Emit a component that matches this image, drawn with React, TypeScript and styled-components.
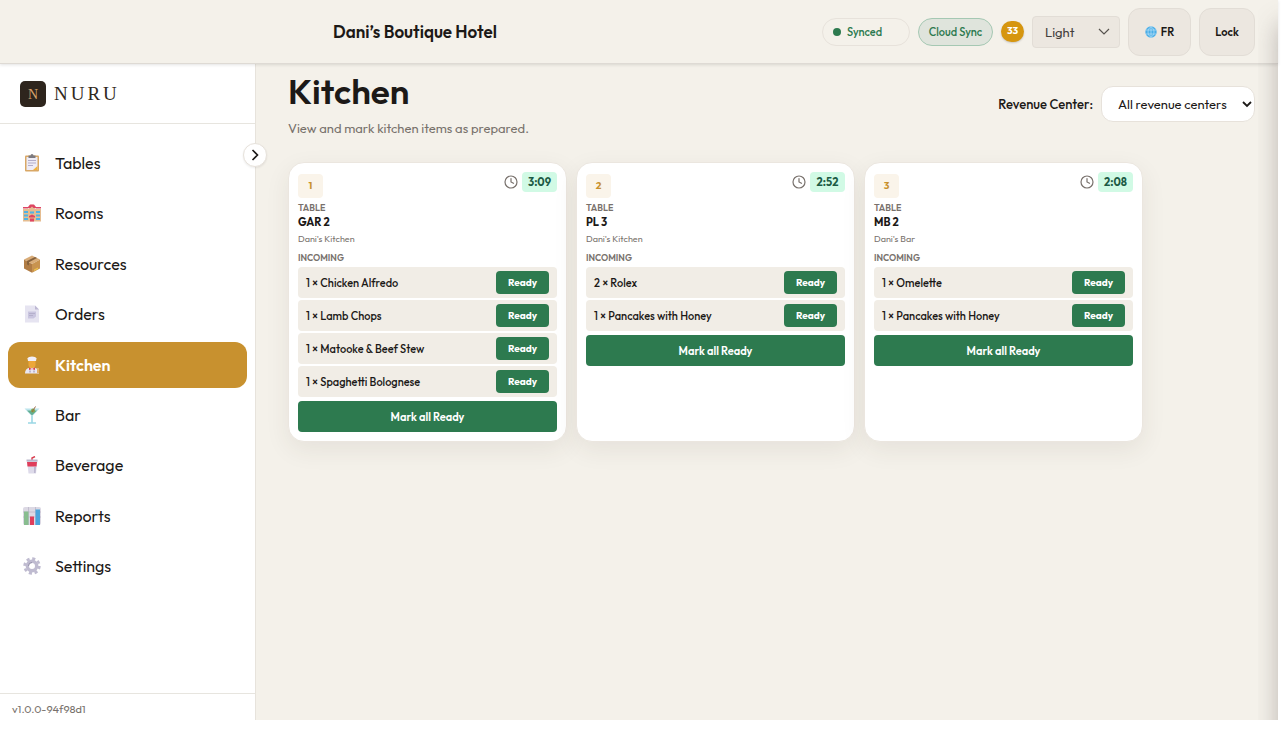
import React from "react";
import styled, { createGlobalStyle } from "styled-components";

const GlobalStyle = createGlobalStyle`
  *, *::before, *::after { box-sizing: border-box; }
  body {
    margin: 0;
    background: #fff;
    color: #1c1917;
    font-family: Outfit, Lato, "Liberation Sans", sans-serif;
    font-size: 14px;
  }
  button, select { font-family: inherit; color: inherit; margin: 0; }
  h1, h2, p, ul { margin: 0; padding: 0; }
  ul { list-style: none; }
`;

const Shell = styled.div`
  position: relative;
  display: flex;
  flex-direction: column;
  min-height: calc(100vh - 33px);
  margin-right: 6px;
  background: #f4f1ea;
`;

const EdgeShade = styled.div`
  position: absolute;
  top: 0;
  right: 0;
  bottom: 0;
  width: 20px;
  z-index: 5;
  overflow: hidden;
  pointer-events: none;
  &::before {
    content: "";
    position: absolute;
    top: 24px;
    left: 100%;
    bottom: -40px;
    width: 60px;
    box-shadow: 0 0 24px rgba(87, 75, 75, 0.36);
  }
`;

const TopBar = styled.header`
  position: relative;
  z-index: 2;
  display: flex;
  align-items: center;
  justify-content: space-between;
  height: 64px;
  padding: 0 23px 0 333px;
  border-bottom: 1px solid #dedad4;
  box-shadow: 0 1px 3px rgba(28, 25, 23, 0.12);
  background: #f4f1ea;
`;

const HotelName = styled.div`
  font-size: 17px;
  font-weight: 600;
  line-height: 24px;
`;

const Tools = styled.div`
  display: flex;
  align-items: center;
  gap: 8px;
`;

const Status = styled.div`
  display: flex;
  align-items: center;
  gap: 6px;
  width: 88px;
  height: 28px;
  padding: 0 10px;
  border: 1px solid #e7e2db;
  border-radius: 14px;
  color: #2d7a4f;
  font-size: 11px;
  font-weight: 500;
`;

const Dot = styled.span`
  width: 8px;
  height: 8px;
  border-radius: 50%;
  background: #2d7a4f;
`;

const SyncButton = styled.button`
  width: 75px;
  height: 28px;
  padding: 0;
  border: 1px solid #a5c8b3;
  border-radius: 14px;
  background: #dfe4dc;
  color: #2d7a4f;
  font-size: 11px;
  font-weight: 500;
`;

const Count = styled.span`
  width: 23px;
  height: 21px;
  border-radius: 11px;
  background: #d6960f;
  box-shadow: 0 1px 2px rgba(28, 25, 23, 0.2);
  color: #fff;
  font-size: 10px;
  font-weight: 700;
  line-height: 20px;
  text-align: center;
`;

const ToolButton = styled.button<{ $width: number }>`
  display: flex;
  align-items: center;
  justify-content: center;
  gap: 4px;
  width: ${(p) => p.$width}px;
  height: 48px;
  padding: 0;
  border: 1px solid #e2ddd6;
  border-radius: 12px;
  background: #ece7e0;
  font-size: 11px;
  font-weight: 600;
`;

const SelectBox = styled.div`
  position: relative;
  display: flex;
  align-items: center;
  svg { position: absolute; pointer-events: none; }
`;

const ThemeSelect = styled.select`
  appearance: none;
  width: 88px;
  height: 32px;
  padding: 0 12px;
  border: 1px solid #e2ddd6;
  border-radius: 4px;
  background: #ece7e0;
  color: #44403c;
  font-size: 13px;
  & + svg { right: 10px; }
`;

const CenterSelect = styled.select`
  appearance: none;
  width: 154px;
  height: 36px;
  padding: 0 16px;
  border: 1px solid #e7e2db;
  border-radius: 12px;
  background: #fff;
  font-size: 13px;
  & + svg { right: 3px; }
`;

const Body = styled.div`
  display: flex;
  flex: 1;
`;

const Sidebar = styled.aside`
  position: relative;
  display: flex;
  flex-direction: column;
  flex: none;
  width: 256px;
  border-right: 1px solid #e7e3dc;
  background: #fff;
`;

const Brand = styled.div`
  display: flex;
  align-items: center;
  gap: 8px;
  height: 60px;
  padding: 0 20px;
  border-bottom: 1px solid #e7e5df;
  color: #302820;
  font-family: "Liberation Serif", serif;
  font-size: 19px;
  letter-spacing: 3px;
`;

const BrandMark = styled.span`
  width: 26px;
  height: 26px;
  border-radius: 5px;
  background: #2e251d;
  color: #d7a26a;
  font-size: 14px;
  letter-spacing: 0;
  line-height: 27px;
  text-align: center;
`;

const Toggle = styled.button`
  position: absolute;
  top: 79px;
  right: -12px;
  z-index: 3;
  display: flex;
  align-items: center;
  justify-content: center;
  width: 24px;
  height: 24px;
  padding: 0;
  border: 1px solid #e7e2db;
  border-radius: 50%;
  background: #fff;
  box-shadow: 0 1px 2px rgba(28, 25, 23, 0.08);
`;

const Nav = styled.nav`
  flex: 1;
  padding: 16px 8px;
  ul {
    display: flex;
    flex-direction: column;
    justify-content: space-between;
    height: 449px;
  }
`;

const NavLink = styled.a<{ $active: boolean }>`
  display: flex;
  align-items: center;
  gap: 14px;
  height: 46px;
  padding: 0 15px;
  border-radius: 12px;
  background: ${(p) => (p.$active ? "#c8912f" : "transparent")};
  color: ${(p) => (p.$active ? "#fff" : "#1c1917")};
  font-size: 16px;
  font-weight: ${(p) => (p.$active ? 600 : 400)};
  text-decoration: none;
`;

const Version = styled.div`
  height: 27px;
  padding: 0 12px;
  border-top: 1px solid #e7e5df;
  color: #78716c;
  font-size: 11px;
  line-height: 31px;
`;

const Main = styled.main`
  flex: 1;
  padding: 7px 23px 40px 32px;
`;

const PageHead = styled.div`
  display: flex;
  align-items: center;
  justify-content: space-between;
  h1 { font-size: 35px; font-weight: 600; line-height: 40px; }
  p { margin-top: 8px; color: #78716c; font-size: 13px; line-height: 18px; }
`;

const Filter = styled.div`
  display: flex;
  align-items: center;
  gap: 8px;
  font-size: 13px;
  font-weight: 500;
`;

const Tickets = styled.div`
  display: grid;
  grid-template-columns: repeat(auto-fill, 279px);
  gap: 9px;
  margin-top: 25px;
`;

const Ticket = styled.article`
  padding: 9px;
  border: 1px solid #ebe6df;
  border-radius: 16px;
  background: #fff;
  box-shadow: 0 8px 24px rgba(68, 50, 40, 0.08);
`;

const TicketHead = styled.div`
  display: flex;
  align-items: flex-start;
  justify-content: space-between;
  padding-bottom: 1px;
`;

const Num = styled.span`
  width: 25px;
  height: 24px;
  margin-top: 2px;
  border-radius: 4px;
  background: #faf4ea;
  color: #c8912f;
  font-size: 10px;
  font-weight: 700;
  line-height: 24px;
  text-align: center;
`;

const Timer = styled.div`
  display: flex;
  align-items: center;
  gap: 4px;
  time {
    width: 35px;
    border-radius: 4px;
    background: #d1fae5;
    color: #1d5b45;
    font-size: 11px;
    font-weight: 700;
    line-height: 20px;
    text-align: center;
  }
`;

const Caption = styled.div`
  color: #78716c;
  font-size: 9px;
  font-weight: 600;
  line-height: 18px;
`;

const TableName = styled.h2`
  font-size: 11px;
  font-weight: 700;
  line-height: 10px;
`;

const Station = styled.div`
  padding: 3px 0 1px;
  color: #78716c;
  font-size: 9px;
  line-height: 18px;
`;

const Items = styled.ul`
  display: grid;
  gap: 2px;
`;

const Item = styled.li`
  display: flex;
  align-items: center;
  justify-content: space-between;
  height: 31px;
  padding: 0 8px;
  border-radius: 4px;
  background: #f1ede6;
  font-size: 11px;
  font-weight: 500;
`;

const Action = styled.button<{ $wide?: boolean }>`
  width: ${(p) => (p.$wide ? "100%" : "53px")};
  height: ${(p) => (p.$wide ? 31 : 23)}px;
  margin-top: ${(p) => (p.$wide ? 4 : 0)}px;
  padding: 0;
  border: 0;
  border-radius: 4px;
  background: #2d7a4f;
  color: #fff;
  font-size: ${(p) => (p.$wide ? 11 : 10)}px;
  font-weight: ${(p) => (p.$wide ? 600 : 700)};
`;

const art: Record<string, React.ReactNode> = {
  Tables: (
    <>
      <rect x="2" y="1.5" width="14" height="16" rx="1" fill="#d9a866" />
      <rect x="3.5" y="3" width="11" height="13" fill="#eeecf6" />
      <path d="M5 6.500h8M5 9h8M5 11.500h5" stroke="#b3adc9" />
      <path d="M14.500 12v4H10z" fill="#f2b33d" />
      <path d="M5.500 1.500h2a1.500 1.500 0 0 1 3 0h2V4h-7z" fill="#7c7a80" />
    </>
  ),
  Rooms: (
    <>
      <path d="M0 5h6V2.500L9 .5l3 2V5h6v12.500H0z" fill="#e5bd91" />
      <path d="M0 3h5.500v1.500H0zM12.500 3H18v1.500h-5.500zM5 3 7 .5h4L13 3v1h-2.500l-1.500-1.500L7.500 4H5z" fill="#de4563" />
      <path d="M1 7h4v2H1zM1 10.500h4v2H1zM1 14h4v2H1zM13 7h4v2h-4zM13 10.500h4v2h-4zM13 14h4v2h-4zM7 7.500h4v2H7z" fill="#4fb3e6" />
      <path d="M6 12l3-1.500 3 1.500v1.500H6zM7 14.500h4v3H7z" fill="#de4563" />
    </>
  ),
  Resources: (
    <>
      <path d="M9 .5 17 4.500 9 9 1 4.500z" fill="#d9ac78" />
      <path d="M1 4.500 9 9v8.800L1 13.500z" fill="#b07c45" />
      <path d="M17 4.500 9 9v8.800l8-4.300z" fill="#c8934f" />
      <path d="m12 2 2 1-8 4.300v3.200l-2-1V6z" fill="#85613c" />
      <path d="m11 14.500 4-2v1.500l-4 2z" fill="#eac04a" />
    </>
  ),
  Orders: (
    <>
      <path d="M2 .5h10l4 4v13H2z" fill="#e6e4f1" />
      <path d="M12 .5v4h4z" fill="#bdb8d3" />
      <path d="M5 6.500h8v5l-2.500 2H5z" fill="#c9c5df" />
      <path d="M6 8.500h6M6 10.500h4" stroke="#b5b0cc" />
    </>
  ),
  Kitchen: (
    <>
      <path d="M2 17.500c0-4 2.500-6 7-6s7 2 7 6z" fill="#e9e7f2" />
      <path d="M5.500 4h7v5c0 4-7 4-7 0z" fill="#eda739" />
      <path d="M4.500 2.500C5-.2 13-.2 13.500 2.500L13 5H5z" fill="#f1eff8" />
      <path d="M6 11.500 9 13l3-1.500v2.500l-3-1-3 1z" fill="#d93e50" />
      <path d="M7 14.500v2M11 14.500v2" stroke="#9088a6" />
      <path d="M14 12h2v5h-2z" fill="#e3ae63" />
    </>
  ),
  Bar: (
    <>
      <path d="M1.500 2.500h15L9 10.500z" fill="#bce4ec" />
      <path d="M4 4.500h10l-5 5z" fill="#63ad91" />
      <path d="M9 10v6.500M5 17h8" stroke="#9bd7e5" strokeWidth="1.600" />
      <circle cx="10" cy="4.500" r="2" fill="#86a64a" />
      <path d="m9 6 3.500-5.500" stroke="#9a6848" />
    </>
  ),
  Beverage: (
    <>
      <path d="M9 4V2l3-1.500" fill="none" stroke="#d93e50" strokeWidth="1.400" />
      <path d="M4 4h10.500l-1.500 13.500H5.500z" fill="#dedbea" />
      <path d="M3.500 3.500h11v2h-11z" fill="#bbb6ca" />
      <path d="M4 6h10l-.5 4.500h-9z" fill="#df3e5b" />
      <path d="M11 11h2l-.5 6H11z" fill="#bdb8d0" />
    </>
  ),
  Reports: (
    <>
      <rect x="0" y="0" width="18" height="18" rx="2" fill="#dcd9e4" />
      <path d="M5.500 0v18M12.500 0v18M0 5h18M0 10h18" stroke="#bcb7c9" strokeWidth=".8" />
      <rect x="1" y="4.500" width="4.500" height="13.500" fill="#88bd8f" />
      <rect x="7" y="9.500" width="4" height="8.500" fill="#df3e5b" />
      <rect x="12.500" y="2.500" width="4.500" height="15.500" fill="#4aa5dc" />
    </>
  ),
  Settings: (
    <>
      <circle cx="9" cy="9" r="7.400" fill="none" stroke="#bfbbd0" strokeWidth="2.600" strokeDasharray="3.100 2.711" />
      <circle cx="9" cy="9" r="4.700" fill="none" stroke="#bfbbd0" strokeWidth="3.400" />
      <path d="M5.500 9A3.500 3.500 0 0 1 9 5.500" fill="none" stroke="#9691aa" />
    </>
  ),
};

const sections = ["Tables", "Rooms", "Resources", "Orders", "Kitchen", "Bar", "Beverage", "Reports", "Settings"];

const tickets = [
  { table: "GAR 2", station: "Dani's Kitchen", time: "3:09", items: ["1 × Chicken Alfredo", "1 × Lamb Chops", "1 × Matooke & Beef Stew", "1 × Spaghetti Bolognese"] },
  { table: "PL 3", station: "Dani's Kitchen", time: "2:52", items: ["2 × Rolex", "1 × Pancakes with Honey"] },
  { table: "MB 2", station: "Dani's Bar", time: "2:08", items: ["1 × Omelette", "1 × Pancakes with Honey"] },
];

const Clock = () => (
  <svg width="14" height="14" viewBox="0 0 14 14" fill="none" stroke="#78716c" strokeWidth="1.200" aria-hidden="true">
    <circle cx="7" cy="7" r="6" />
    <path d="M7 3.500V7l2.500 1.300" strokeLinecap="round" />
  </svg>
);

const Globe = () => (
  <svg width="12" height="12" viewBox="0 0 12 12" aria-hidden="true">
    <circle cx="6" cy="6" r="5.700" fill="#4aaee8" />
    <path d="M1 4h10M1 8h10M6 .5v11M6 .5c-4 3-4 8 0 11M6 .5c4 3 4 8 0 11" fill="none" stroke="#b9e1f7" strokeWidth=".7" />
  </svg>
);

export default function App() {
  return (
    <Shell>
      <GlobalStyle />
      <TopBar>
        <HotelName>Dani’s Boutique Hotel</HotelName>
        <Tools>
          <Status><Dot />Synced</Status>
          <SyncButton>Cloud Sync</SyncButton>
          <Count>33</Count>
          <SelectBox>
            <ThemeSelect aria-label="Theme" defaultValue="Light">
              <option>Light</option>
            </ThemeSelect>
            <svg width="12" height="8" viewBox="0 0 12 8" fill="none" stroke="#57534e" strokeWidth="1.200">
              <path d="m1 1 5 5 5-5" />
            </svg>
          </SelectBox>
          <ToolButton $width={63}><Globe />FR</ToolButton>
          <ToolButton $width={56}>Lock</ToolButton>
        </Tools>
      </TopBar>
      <Body>
        <Sidebar>
          <Brand><BrandMark>N</BrandMark>NURU</Brand>
          <Toggle aria-label="Toggle sidebar">
            <svg width="8" height="12" viewBox="0 0 8 12" fill="none" stroke="#1c1917" strokeWidth="1.600">
              <path d="m1.500 1 5 5-5 5" />
            </svg>
          </Toggle>
          <Nav>
            <ul>
              {sections.map((name) => (
                <li key={name}>
                  <NavLink href="#" $active={name === "Kitchen"}>
                    <svg width="18" height="18" viewBox="0 0 18 18" aria-hidden="true">{art[name]}</svg>
                    {name}
                  </NavLink>
                </li>
              ))}
            </ul>
          </Nav>
          <Version>v1.0.0-94f98d1</Version>
        </Sidebar>
        <Main>
          <PageHead>
            <div>
              <h1>Kitchen</h1>
              <p>View and mark kitchen items as prepared.</p>
            </div>
            <Filter>
              <label htmlFor="center">Revenue Center:</label>
              <SelectBox>
                <CenterSelect id="center" defaultValue="All revenue centers">
                  <option>All revenue centers</option>
                </CenterSelect>
                <svg width="10" height="7" viewBox="0 0 10 7" fill="none" stroke="#1c1917" strokeWidth="1.800">
                  <path d="m1 1 4 4 4-4" />
                </svg>
              </SelectBox>
            </Filter>
          </PageHead>
          <Tickets>
            {tickets.map((t, i) => (
              <Ticket key={t.table}>
                <TicketHead>
                  <Num>{i + 1}</Num>
                  <Timer><Clock /><time>{t.time}</time></Timer>
                </TicketHead>
                <Caption>TABLE</Caption>
                <TableName>{t.table}</TableName>
                <Station>{t.station}</Station>
                <Caption>INCOMING</Caption>
                <Items>
                  {t.items.map((item) => (
                    <Item key={item}>
                      {item}
                      <Action>Ready</Action>
                    </Item>
                  ))}
                </Items>
                <Action $wide>Mark all Ready</Action>
              </Ticket>
            ))}
          </Tickets>
        </Main>
      </Body>
      <EdgeShade />
    </Shell>
  );
}
